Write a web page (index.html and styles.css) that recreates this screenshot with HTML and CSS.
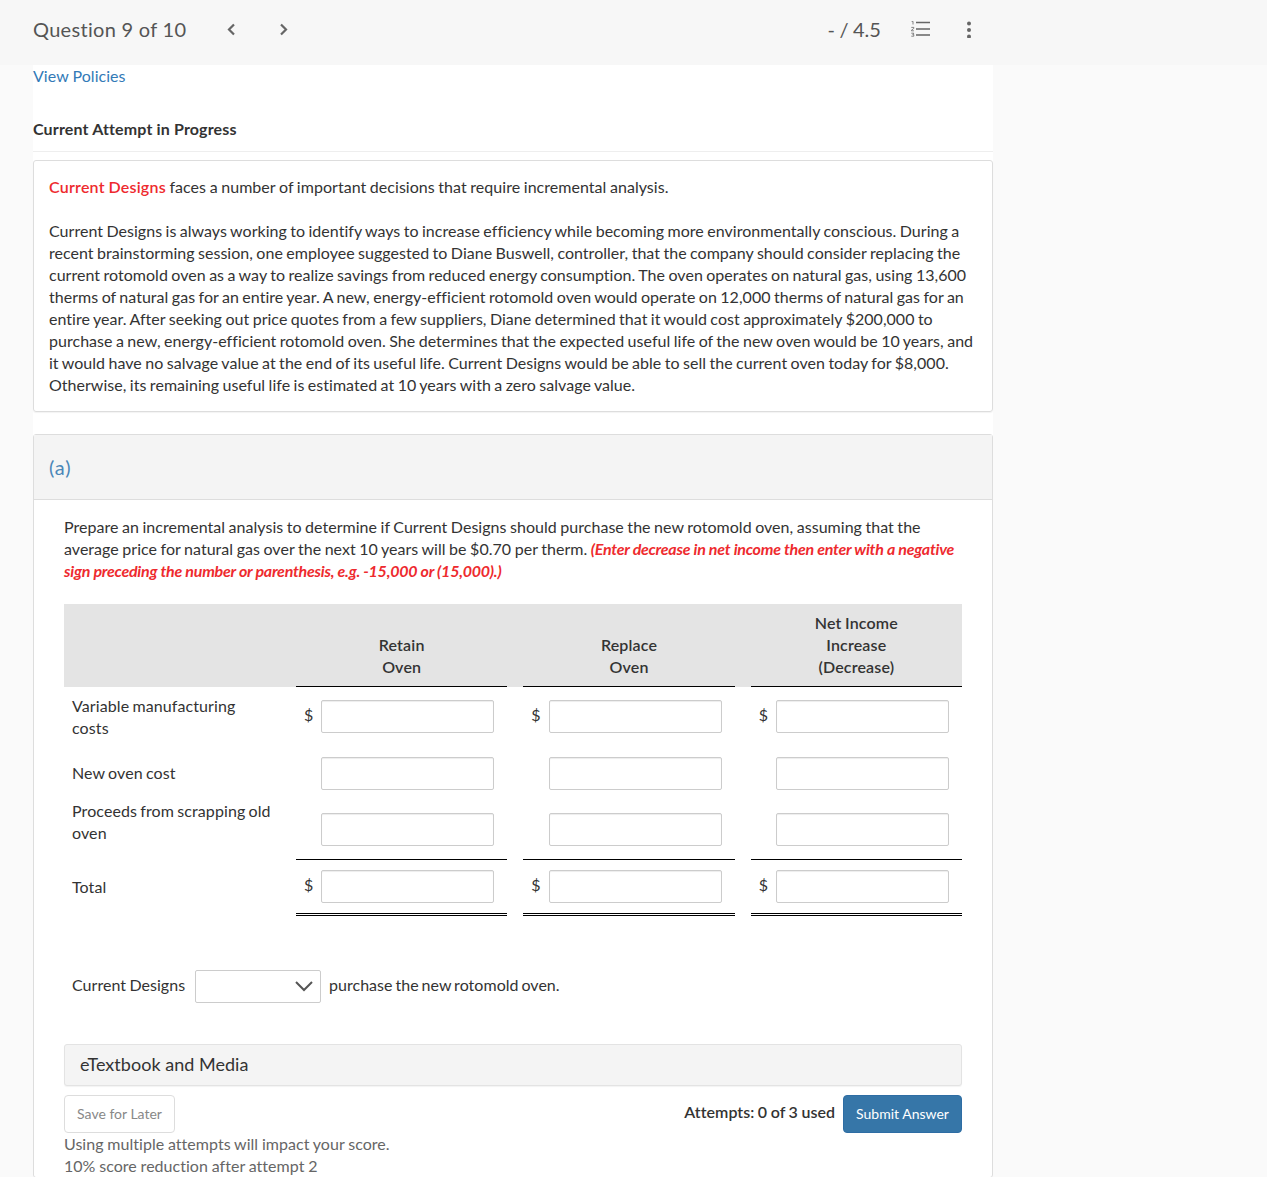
FILE: index.html
```html
<!DOCTYPE html>
<html lang="en">
<head>
<meta charset="utf-8">
<title>Question 9 of 10</title>
<link rel="stylesheet" href="styles.css">
</head>
<body>
<header class="topbar">
  <div class="topbar-left">
    <span class="q-title">Question 9 of 10</span>
    <svg class="chev chev-prev" viewBox="0 0 10 13" width="10" height="13"><path d="M8 1.5 3 6.5l5 5" fill="none" stroke="#666" stroke-width="2.2"/></svg>
    <svg class="chev chev-next" viewBox="0 0 10 13" width="10" height="13"><path d="M2 1.5l5 5-5 5" fill="none" stroke="#666" stroke-width="2.2"/></svg>
  </div>
  <div class="topbar-right">
    <span class="score">- / 4.5</span>
    <svg class="list-icon" viewBox="0 0 20 16" width="20" height="16">
      <path d="M5 1.5h14M5 8h14M5 14h14" stroke="#666" stroke-width="1.6" fill="none"/>
      <path d="M.6 .3h1.4v3.2M.3 6.4h2.5v1L.3 9.4v.4h2.6M.3 12.2h2.5l-1 1.4h1v1.6H.3" stroke="#666" stroke-width=".8" fill="none"/>
    </svg>
    <svg class="dots-icon" viewBox="0 0 6 17" width="6" height="17"><circle cx="3" cy="2.5" r="2" fill="#666"/><circle cx="3" cy="9" r="2" fill="#666"/><circle cx="3" cy="15.5" r="2" fill="#666"/></svg>
  </div>
</header>

<main class="page">
  <a class="policies" href="#">View Policies</a>
  <h2 class="attempt-title">Current Attempt in Progress</h2>

  <section class="intro">
    <p class="lead"><span class="brand">Current Designs</span> faces a number of important decisions that require incremental analysis.</p>
    <p>Current Designs is always working to identify ways to increase efficiency while becoming more environmentally conscious. During a recent brainstorming session, one employee suggested to Diane Buswell, controller, that the company should consider replacing the current rotomold oven as a way to realize savings from reduced energy consumption. The oven operates on natural gas, using 13,600 therms of natural gas for an entire year. A new, energy-efficient rotomold oven would operate on 12,000 therms of natural gas for an entire year. After seeking out price quotes from a few suppliers, Diane determined that it would cost approximately $200,000 to purchase a new, energy-efficient rotomold oven. She determines that the expected useful life of the new oven would be 10 years, and it would have no salvage value at the end of its useful life. Current Designs would be able to sell the current oven today for $8,000. Otherwise, its remaining useful life is estimated at 10 years with a zero salvage value.</p>
  </section>

  <section class="part">
    <div class="part-head">(a)</div>
    <div class="part-body">
      <p class="prompt">Prepare an incremental analysis to determine if Current Designs should purchase the new rotomold oven, assuming that the average price for natural gas over the next 10 years will be $0.70 per therm. <em class="hint">(Enter decrease in net income then enter with a negative sign preceding the number or parenthesis, e.g. -15,000 or (15,000).)</em></p>

      <div class="sheet">
        <div class="row row-head">
          <div></div>
          <div class="th">Retain<br>Oven</div>
          <div class="th">Replace<br>Oven</div>
          <div class="th">Net Income<br>Increase<br>(Decrease)</div>
        </div>
        <div class="row row-a">
          <div class="label">Variable manufacturing costs</div>
          <div class="cell"><span class="cur">$</span><input class="field" type="text"></div>
          <div class="cell"><span class="cur">$</span><input class="field" type="text"></div>
          <div class="cell"><span class="cur">$</span><input class="field" type="text"></div>
        </div>
        <div class="row row-b">
          <div class="label">New oven cost</div>
          <div class="cell"><span class="cur"></span><input class="field" type="text"></div>
          <div class="cell"><span class="cur"></span><input class="field" type="text"></div>
          <div class="cell"><span class="cur"></span><input class="field" type="text"></div>
        </div>
        <div class="row row-c">
          <div class="label">Proceeds from scrapping old oven</div>
          <div class="cell"><span class="cur"></span><input class="field" type="text"></div>
          <div class="cell"><span class="cur"></span><input class="field" type="text"></div>
          <div class="cell"><span class="cur"></span><input class="field" type="text"></div>
        </div>
        <div class="row row-d">
          <div class="label">Total</div>
          <div class="cell"><span class="cur">$</span><input class="field" type="text"></div>
          <div class="cell"><span class="cur">$</span><input class="field" type="text"></div>
          <div class="cell"><span class="cur">$</span><input class="field" type="text"></div>
        </div>
      </div>

      <div class="sentence">
        <span class="sentence-text sentence-lead">Current Designs</span>
        <span class="select-wrap">
          <select class="select"><option></option></select>
          <svg class="select-chev" viewBox="0 0 18 11" width="18" height="11"><path d="M1 1l8 8 8-8" fill="none" stroke="#555" stroke-width="2"/></svg>
        </span>
        <span class="sentence-text sentence-tail">purchase the new rotomold oven.</span>
      </div>

      <div class="media">eTextbook and Media</div>

      <div class="actions">
        <button class="btn btn-save" type="button">Save for Later</button>
        <div class="submit-side">
          <span class="attempts">Attempts: 0 of 3 used</span>
          <button class="btn btn-submit" type="button">Submit Answer</button>
        </div>
      </div>
      <p class="note">Using multiple attempts will impact your score.<br>10% score reduction after attempt 2</p>
    </div>
  </section>
</main>
</body>
</html>
```

FILE: styles.css
```css
* { box-sizing: border-box; }
html, body { height: 100vh; overflow: hidden; }
body {
  margin: 0;
  background: #fafafa;
  color: #333;
  font: 16px/22px Lato, "Liberation Sans", sans-serif;
  word-spacing: -.7px;
  letter-spacing: .03px;
}
p { margin: 0; }

.topbar {
  height: 65px;
  background: #f7f7f7;
  display: flex;
  align-items: center;
  padding: 0 295px 7px 33px;
  justify-content: space-between;
}
.topbar-left, .topbar-right { display: flex; align-items: center; }
.q-title, .score { font-size: 20px; color: #555; }
.q-title { letter-spacing: .3px; word-spacing: 0; }
.chev-prev { margin-left: 40px; }
.chev-next { margin-left: 43px; }
.list-icon { margin-left: 30px; }
.dots-icon { margin-left: 35px; }

.page {
  width: 960px;
  margin-left: 33px;
  background: #fff;
}
.policies {
  display: block;
  color: #337ab7;
  text-decoration: none;
  word-spacing: 0;
}
.attempt-title {
  margin: 0 0 8px;
  padding: 31px 0 11px;
  font-size: 16px;
  line-height: 22px;
  font-weight: 700;
  letter-spacing: .15px;
  word-spacing: 0;
  border-bottom: 1px solid #eee;
}
.intro {
  border: 1px solid #ddd;
  border-radius: 3px;
  padding: 15px;
  box-shadow: 0 1px 1px rgba(0,0,0,.05);
  height: 252px;
}
.intro p + p { margin-top: 22px; }
.lead { word-spacing: -.5px; }
.brand { color: #ee2a2e; font-weight: 600; letter-spacing: .22px; }

.part {
  margin-top: 22px;
  border: 1px solid #ddd;
  border-radius: 3px;
}
.part-head {
  height: 65px;
  padding: 0 15px;
  display: flex;
  align-items: center;
  background: #f4f4f4;
  border-bottom: 1px solid #ddd;
  font-size: 20px;
  letter-spacing: .8px;
  color: #4a86b8;
}
.part-body { padding: 16px 30px 0; }
.prompt { word-spacing: -.6px; }
.hint { color: #ee2a2e; font-weight: 700; font-style: italic; letter-spacing: -.24px; word-spacing: 0; }

.sheet { margin-top: 22px; }
.row {
  display: grid;
  grid-template-columns: 216px repeat(3, 1fr);
  column-gap: 16px;
}
.row-head { height: 83px; background: #e4e4e4; }
.th {
  display: flex;
  align-items: flex-end;
  justify-content: center;
  text-align: center;
  padding-bottom: 8px;
  border-bottom: 1px solid #000;
  font-weight: 600;
  letter-spacing: .15px;
}
.label { padding-left: 8px; padding-right: 8px; align-self: center; letter-spacing: .1px; word-spacing: -1px; }
.cell {
  display: flex;
  align-items: center;
  padding-left: 8px;
}
.cur { width: 17.4px; flex: none; padding-bottom: 4px; }
.field {
  width: 173px;
  height: 33px;
  flex: none;
  padding: 0 6px;
  background: #fff;
  border: 1px solid #ccc;
  border-radius: 2px;
  box-shadow: inset 0 1px 1px rgba(0,0,0,.075);
}
.row-a { height: 59px; }
.row-b { padding: 11px 0 10px; }
.row-b .label { padding-bottom: 2px; }
.row-c { height: 60px; }
.row-c .label { align-self: start; }
.row-c .cell { border-bottom: 1px solid #000; padding-top: 13px; padding-bottom: 13px; }
.row-d { height: 56px; }
.row-d .label { padding-bottom: 2px; }
.row-d .cell { border-bottom: 3px double #000; padding-bottom: 0; }

.sentence {
  display: flex;
  align-items: center;
  gap: 8px;
  margin-top: 54px;
  padding-left: 8px;
}
.sentence-text { padding-bottom: 4px; }
.sentence-lead { width: 115px; white-space: nowrap; }
.sentence-tail { word-spacing: -1.2px; }
.select-wrap { position: relative; display: block; height: 33px; }
.select {
  display: block;
  width: 126px;
  height: 33px;
  appearance: none;
  background: #fff;
  border: 1px solid #ccc;
  border-radius: 2px;
}
.select-chev { position: absolute; right: 8px; top: 11px; }

.media {
  margin-top: 41px;
  height: 42px;
  padding: 0 15px 2px;
  display: flex;
  align-items: center;
  background: #f4f4f4;
  border: 1px solid #e3e3e3;
  border-radius: 3px;
  box-shadow: 0 1px 1px rgba(0,0,0,.05);
  font-size: 18px;
  word-spacing: 0;
}
.actions {
  display: flex;
  justify-content: space-between;
  margin-top: 9px;
}
.submit-side { display: flex; gap: 8px; }
.attempts { font-weight: 600; line-height: 34px; word-spacing: -.5px; }
.btn {
  height: 38px;
  font: 14px/20px Lato, "Liberation Sans", sans-serif;
  border-radius: 4px;
  padding: 0 12px;
  background: #fff;
}
.btn-save { width: 111px; color: #888; border: 1px solid #ddd; }
.btn-submit { width: 119px; color: #fff; background: #3676a8; border: 1px solid #2e6da4; }
.note { color: #666; word-spacing: -.35px; }
```
